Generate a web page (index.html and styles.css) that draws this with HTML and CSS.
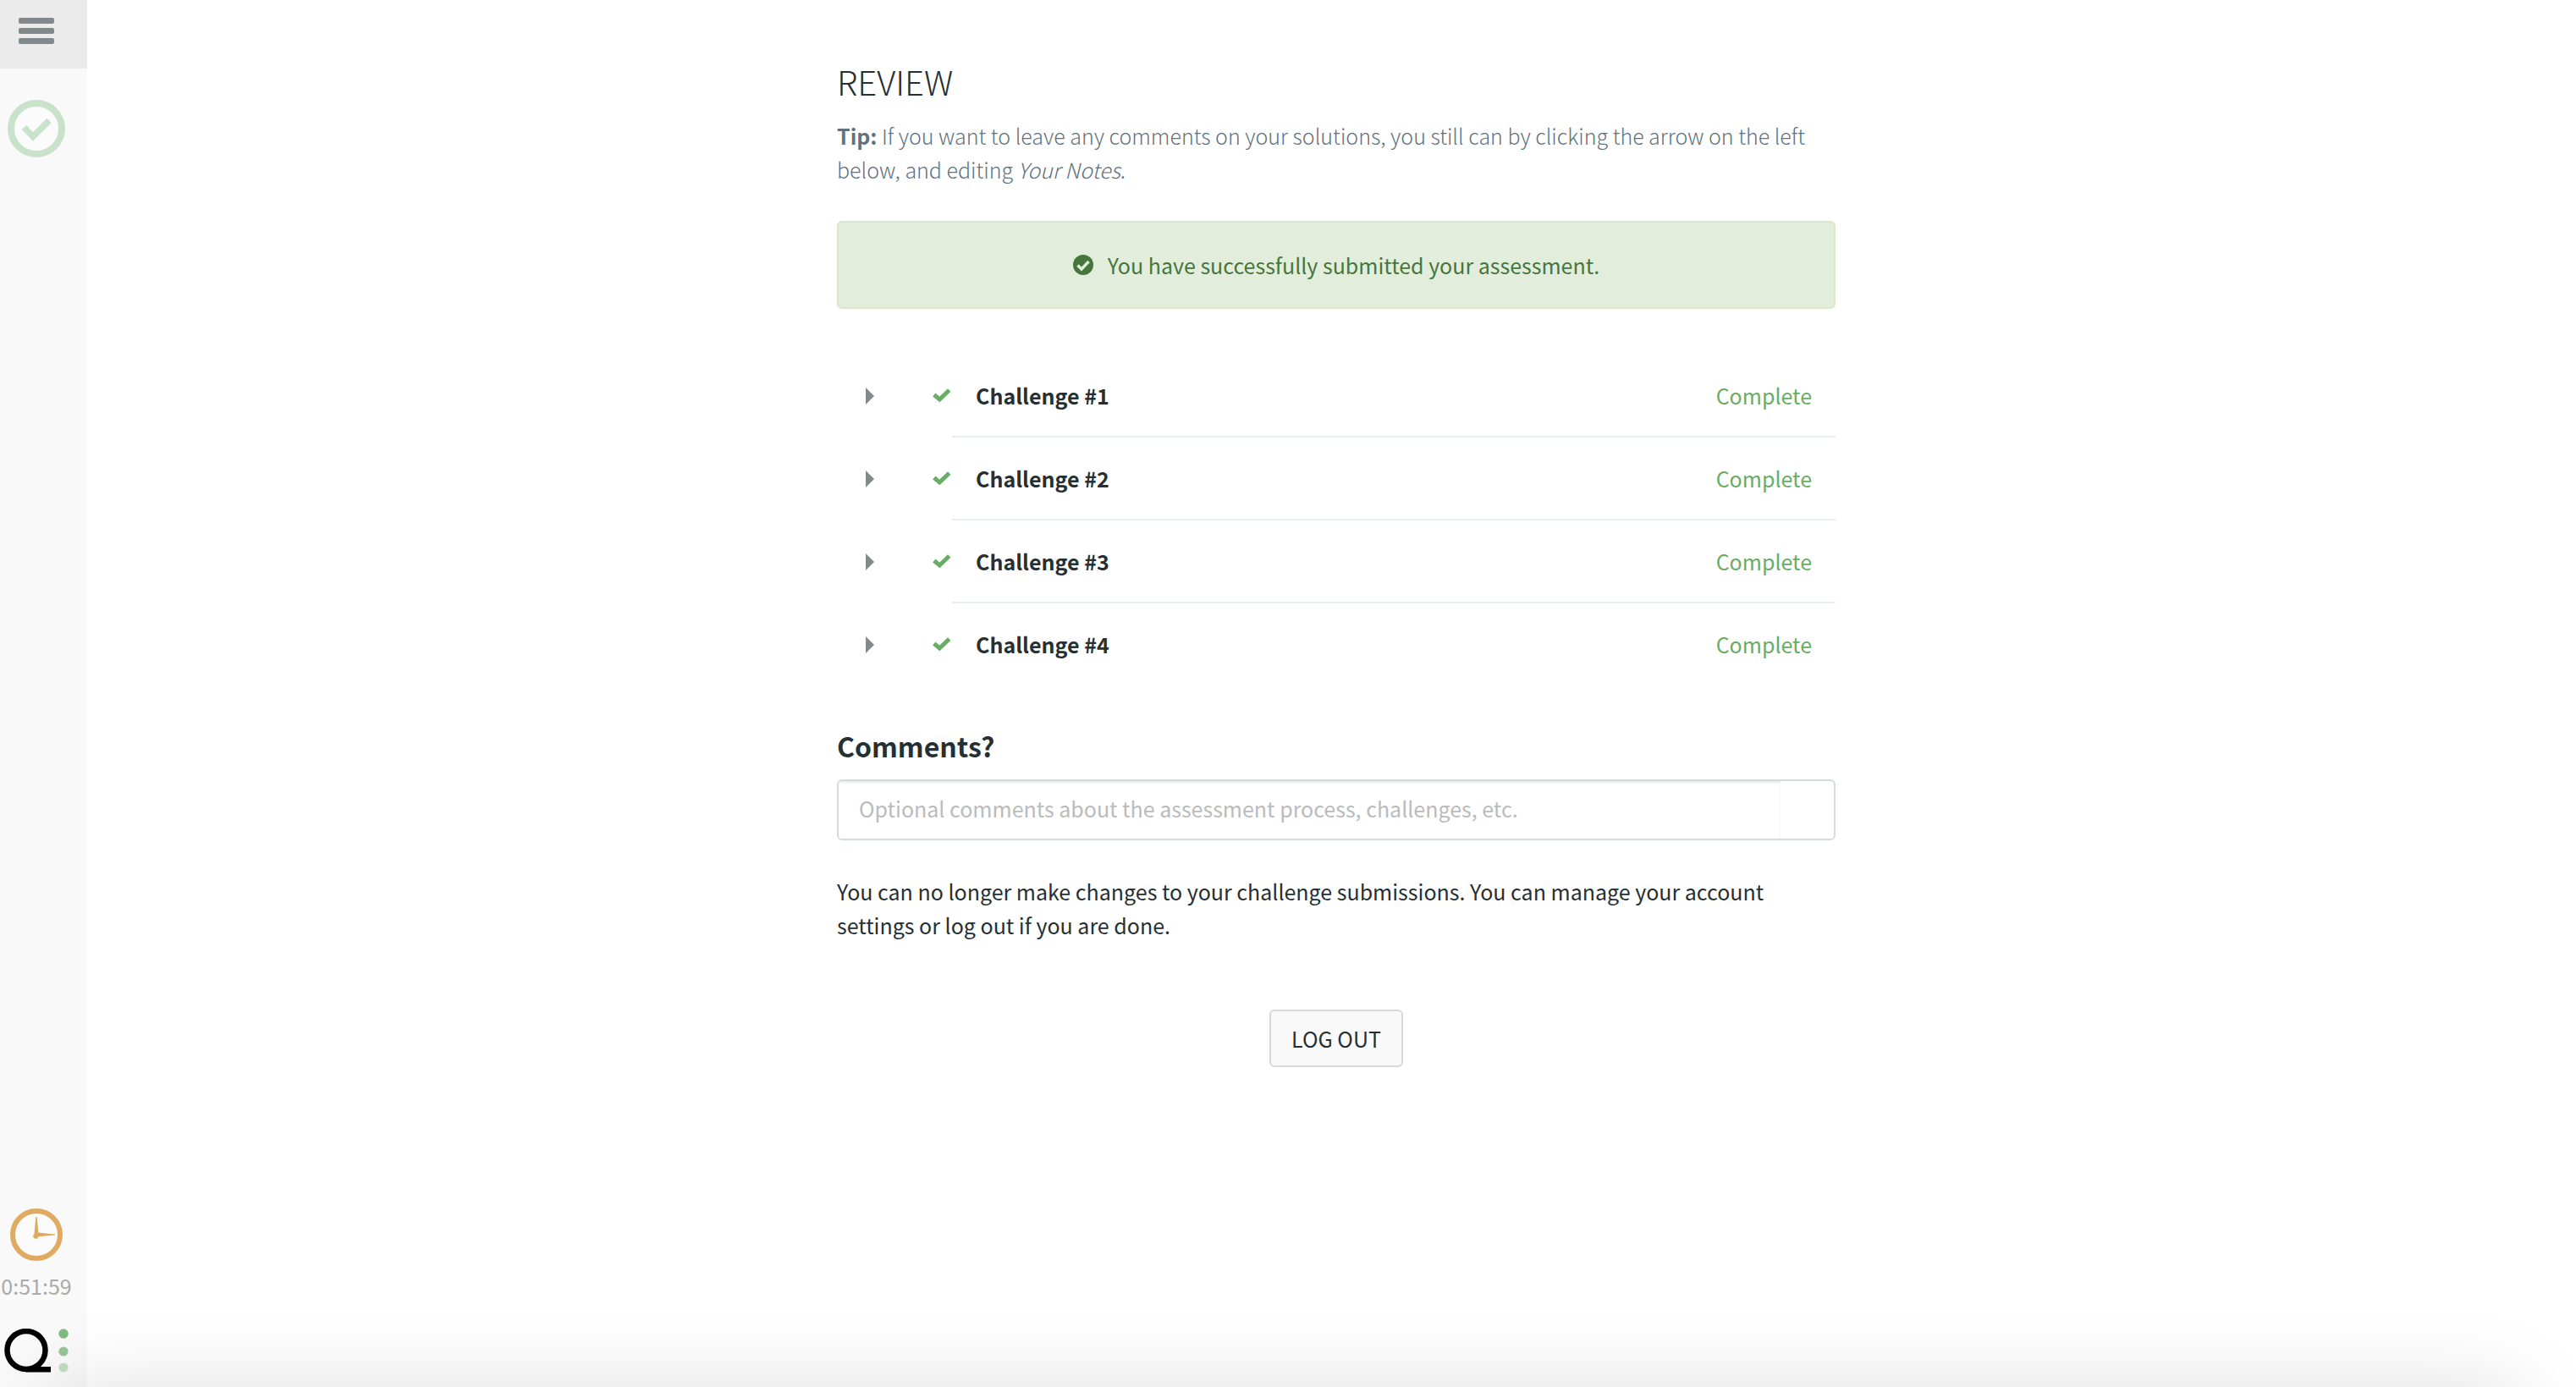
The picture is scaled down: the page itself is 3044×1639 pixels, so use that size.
FILE: index.html
```html
<!DOCTYPE html>
<html lang="en">
<head>
<meta charset="utf-8">
<title>Review</title>
<link rel="stylesheet" href="styles.css">
</head>
<body>
<div class="app">
  <aside class="sidebar">
    <button class="menu-toggle" type="button" aria-label="Menu">
      <svg width="42" height="32" viewBox="0 0 42 32"><g fill="#82898d"><rect width="42" height="7" rx="2"/><rect y="12" width="42" height="7" rx="2"/><rect y="24" width="42" height="7" rx="2"/></g></svg>
    </button>
    <a class="step" href="#review" aria-label="Review">
      <svg width="70" height="70" viewBox="0 0 70 70"><circle cx="35" cy="35" r="30" fill="#fbfbfb" stroke="#c9e2ca" stroke-width="8"/><path d="M20.500 33.500 31 44.500 50 25.500" fill="none" stroke="#c9e2ca" stroke-width="7.500"/></svg>
    </a>
    <div class="timer">
      <svg width="62" height="62" viewBox="0 0 62 62"><circle cx="31" cy="31" r="28" fill="#fbfbfb" stroke="#dfab60" stroke-width="6"/><path d="M30.300 10h1.400l1.700 18.500 19.600 2v1l-19.500 1.700a3.200 3.200 0 1 1-5-3.200z" fill="#dfab60"/></svg>
      <span class="time">0:51:59</span>
    </div>
    <a class="brand" href="#home" aria-label="Home">
      <svg width="80" height="52" viewBox="0 0 80 52"><ellipse cx="26" cy="25.500" rx="22.500" ry="22.500" fill="none" stroke="#000" stroke-width="6.500"/><path d="M26 45.500 39 45h16v6.500H26z" fill="#000"/><circle cx="70" cy="6" r="5.700" fill="#7fba80"/><circle cx="70" cy="27" r="5.600" fill="#96c797"/><circle cx="70" cy="46" r="5.600" fill="#c3dec4"/></svg>
    </a>
  </aside>

  <main class="content">
    <div class="column">
      <h1 class="title">REVIEW</h1>
      <p class="tip"><b>Tip:</b> If you want to leave any comments on your solutions, you still can by clicking the arrow on the left below, and editing <i>Your Notes</i>.</p>

      <div class="alert" role="status">
        <svg width="24" height="24" viewBox="0 0 24 24"><circle cx="12" cy="12" r="12" fill="#46763e"/><path d="M5.500 12.500 10 17l8.500-9" fill="none" stroke="#e2eedb" stroke-width="3.400"/></svg>
        <span>You have successfully submitted your assessment.</span>
      </div>

      <ul class="challenges">
        <li class="challenge">
          <button class="expand" type="button" aria-label="Expand Challenge #1"><svg width="10" height="20" viewBox="0 0 10 20"><path d="M0 0 10 10 0 20z" fill="#82898d"/></svg></button>
          <svg class="tick" width="22" height="18" viewBox="0 0 22 18"><path d="M1.800 7.500 8.300 13 19.700 2" fill="none" stroke="#67ad65" stroke-width="5"/></svg>
          <div class="summary"><span class="name">Challenge #1</span><span class="state">Complete</span></div>
        </li>
        <li class="challenge">
          <button class="expand" type="button" aria-label="Expand Challenge #2"><svg width="10" height="20" viewBox="0 0 10 20"><path d="M0 0 10 10 0 20z" fill="#82898d"/></svg></button>
          <svg class="tick" width="22" height="18" viewBox="0 0 22 18"><path d="M1.800 7.500 8.300 13 19.700 2" fill="none" stroke="#67ad65" stroke-width="5"/></svg>
          <div class="summary"><span class="name">Challenge #2</span><span class="state">Complete</span></div>
        </li>
        <li class="challenge">
          <button class="expand" type="button" aria-label="Expand Challenge #3"><svg width="10" height="20" viewBox="0 0 10 20"><path d="M0 0 10 10 0 20z" fill="#82898d"/></svg></button>
          <svg class="tick" width="22" height="18" viewBox="0 0 22 18"><path d="M1.800 7.500 8.300 13 19.700 2" fill="none" stroke="#67ad65" stroke-width="5"/></svg>
          <div class="summary"><span class="name">Challenge #3</span><span class="state">Complete</span></div>
        </li>
        <li class="challenge">
          <button class="expand" type="button" aria-label="Expand Challenge #4"><svg width="10" height="20" viewBox="0 0 10 20"><path d="M0 0 10 10 0 20z" fill="#82898d"/></svg></button>
          <svg class="tick" width="22" height="18" viewBox="0 0 22 18"><path d="M1.800 7.500 8.300 13 19.700 2" fill="none" stroke="#67ad65" stroke-width="5"/></svg>
          <div class="summary"><span class="name">Challenge #4</span><span class="state">Complete</span></div>
        </li>
      </ul>

      <label class="comments-label" for="comments">Comments?</label>
      <div class="field">
        <input class="comments" id="comments" type="text" placeholder="Optional comments about the assessment process, challenges, etc.">
        <span class="field-end"></span>
      </div>

      <p class="closing">You can no longer make changes to your challenge submissions. You can manage your account settings or log out if you are done.</p>
      <button class="logout" type="button">LOG OUT</button>
    </div>
  </main>
</div>
<div class="tray-shadow"></div>
</body>
</html>
```
FILE: styles.css
```css
* { box-sizing: border-box; }

body {
  margin: 0;
  background: #fff;
  color: #263033;
  font: 400 25px/40px "Noto Sans CJK SC", "Noto Sans", sans-serif;
  overflow: hidden;
}

svg { display: block; flex: none; }
button { font: inherit; color: inherit; cursor: pointer; }

.app { display: flex; min-height: 100vh; }

/* Sidebar */
.sidebar {
  width: 103px;
  flex: none;
  display: flex;
  flex-direction: column;
  background: #f9f9f9;
}
.menu-toggle {
  height: 81px;
  padding: 0 0 8px 22px;
  border: 0;
  background: #ebebeb;
  display: flex;
  align-items: center;
}
.step { margin: 36px 0 0 8px; }
.timer {
  width: 86px;
  margin-top: auto;
  display: flex;
  flex-direction: column;
  align-items: center;
  gap: 9px;
  color: #aaa;
}
.brand { margin: 31px 0 17px 5px; }

/* Main column */
.content {
  flex: 1;
  padding: 72px 0 0 11px;
}
.column {
  max-width: 1180px;
  margin: 0 auto;
  display: flex;
  flex-direction: column;
}
.title {
  margin: 0;
  font-size: 40px;
  line-height: 48px;
  font-weight: 300;
}
.tip {
  margin: 20px 0 41px;
  color: #5f727d;
  font-weight: 300;
}
.tip b { font-weight: 700; }

.alert {
  height: 104px;
  border: 2px solid #d9e8c8;
  border-radius: 6px;
  background: #e2eedb;
  color: #46763e;
  display: flex;
  align-items: center;
  justify-content: center;
  gap: 17px;
}

/* Challenge list */
.challenges {
  margin: 54px 0 0;
  padding: 0;
  list-style: none;
}
.challenge {
  display: grid;
  grid-template-columns: 113px 23px 1fr;
  align-items: center;
}
.expand {
  padding: 0 0 0 34px;
  border: 0;
  background: none;
}
.summary {
  height: 98px;
  padding: 0 28px;
  border-bottom: 2px solid #e8edf1;
  display: flex;
  align-items: center;
  justify-content: space-between;
}
.challenge:last-child .summary { border-color: transparent; }
.name { font-weight: 700; }
.state { color: #67ad65; }

/* Comments */
.comments-label {
  margin: 50px 0 20px;
  font-size: 32px;
  font-weight: 700;
}
.field {
  height: 72px;
  border: 2px solid #d3dbdf;
  border-radius: 6px;
  overflow: hidden;
  display: flex;
}
.comments {
  flex: 1;
  min-width: 0;
  padding: 0 24px 4px;
  border: 0;
  outline: 0;
  font: inherit;
  color: inherit;
  background: #fff;
  box-shadow: inset 0 2px 2px rgba(0, 0, 0, .08);
}
.comments::placeholder { color: #bbb; opacity: 1; }
.field-end { width: 63px; }

.closing { margin: 40px 0 80px; }
.logout {
  align-self: center;
  height: 68px;
  padding: 0 24px;
  border: 2px solid #d8d8d8;
  border-radius: 6px;
  background: #f9f9f9;
}

/* Soft shadow cast upward by the tray just below the window */
.tray-shadow {
  position: fixed;
  top: 100%;
  left: 70px;
  right: 70px;
  height: 200px;
  box-shadow: 0 6px 100px rgba(0, 0, 0, .15);
  pointer-events: none;
}
```
